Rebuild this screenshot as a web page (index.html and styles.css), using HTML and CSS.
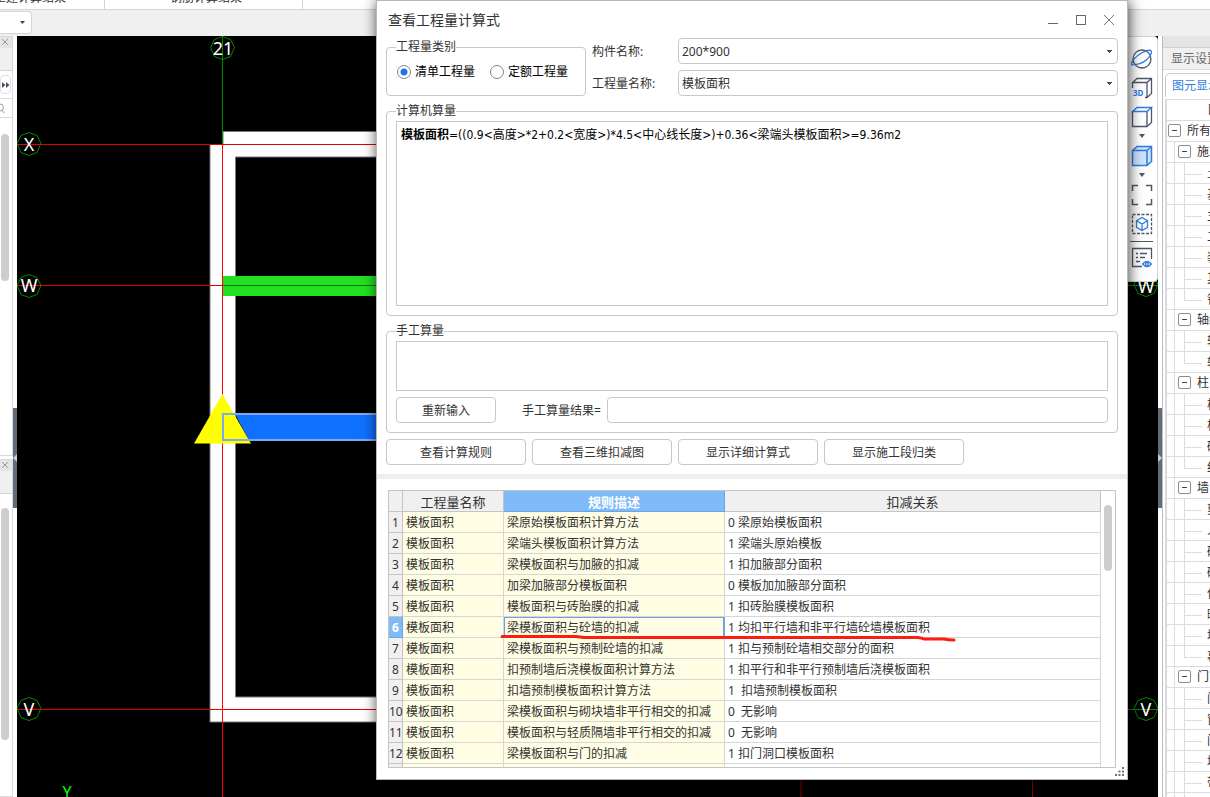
FILE: index.html
```html
<!DOCTYPE html>
<html lang="zh-CN">
<head>
<meta charset="utf-8">
<title>查看工程量计算式</title>
<link rel="stylesheet" href="styles.css">
</head>
<body>
<div class="app">
  <header class="ribbon">
    <span class="ribbon-group ribbon-first">土建计算结果</span>
    <span class="ribbon-group ribbon-second">钢筋计算结果</span>
  </header>
  <div class="toolbar">
    <button class="floor-drop" aria-label="楼层"><svg width="6" height="4"><path d="M0 0h5L2.5 3z" fill="#3c4560"/></svg></button>
  </div>
  <main class="workspace">
    <aside class="nav">
      <section class="nav-pane nav-top">
        <div class="nav-close"><svg width="8" height="8"><path d="M1 1l6 6M7 1l-6 6" stroke="#9a9a9a" fill="none"/></svg></div>
        <div class="nav-title"></div>
        <div class="nav-more"><button class="more" aria-label="更多"><svg width="8" height="6"><path d="M0 0l3.500 3L0 6zM4 0l3.500 3L4 6z" fill="#4a5268"/></svg></button></div>
        <div class="nav-search"><svg width="8" height="11"><circle cx="0" cy="4.500" r="3.500" stroke="#999" fill="none"/><path d="M2 7l2 3" stroke="#999"/></svg></div>
        <div class="thumb thumb-a"></div>
      </section>
      <section class="nav-pane nav-bottom">
        <div class="nav-close"><svg width="8" height="8"><path d="M1 1l6 6M7 1l-6 6" stroke="#9a9a9a" fill="none"/></svg></div>
        <div class="nav-title"></div>
        <div class="thumb thumb-b"></div>
      </section>
    </aside>
    <div class="splitter"><div class="handle"><svg width="4" height="8"><path d="M4 0L0 4l4 4z" fill="#c9ced4"/></svg></div></div>
    <div class="canvas">
      <svg class="drawing" viewBox="17 36 1141 761" preserveAspectRatio="xMinYMin slice">
        <path d="M223 131.500H1000V722H210V144.500H223zM235.500 157V697H1000V157z" fill="#fff" stroke="#777" fill-rule="evenodd"/>
        <g fill="none" stroke="#e00000">
          <path d="M17 144.500H376M17 709.500H376M17 285.500H223"/>
          <path d="M222.500 144V797" stroke="#ff0000"/>
          <path d="M801 780V797M1032.500 780V797" stroke="#900000"/>
        </g>
        <rect x="223" y="276" width="160" height="20" fill="#22e022"/>
        <path d="M223 285.500H376" stroke="#0a7a0a"/>
        <path d="M222.500 394L251 443.500H194z" fill="#ffff00"/>
        <path d="M235 414H380V440H249z" fill="#1070ff"/>
        <path d="M380 414H223V440H380" fill="none" stroke="#7aabf0" stroke-width="2"/>
        <g fill="none" stroke="#008a00">
          <path d="M222.500 36V144M1128 285.500H1158M1128 709.500H1158"/>
          <path d="M222.500 36.500l8 3 4 8-4 9-8 3-8-3-4-9 4-8z"/>
          <path d="M29 132.500l8 3 4 8-4 9-8 3-8-3-4-9 4-8z"/>
          <path d="M29 274.500l8 3 4 8-4 9-8 3-8-3-4-9 4-8z"/>
          <path d="M29 697.500l8 3 4 8-4 9-8 3-8-3-4-9 4-8z"/>
          <path d="M1146 273.500l8 3 4 8-4 9-8 3-8-3-4-9 4-8z"/>
          <path d="M1146 697.500l8 3 4 8-4 9-8 3-8-3-4-9 4-8z"/>
        </g>
        <g class="axis-name">
          <text x="223" y="55">21</text>
          <text x="29" y="151">X</text>
          <text x="29" y="292">W</text>
          <text x="29" y="716">V</text>
          <text x="1146" y="293">W</text>
          <text x="1146" y="716">V</text>
        </g>
        <text class="axis-y" x="67" y="798">Y</text>
      </svg>
      <div class="view-tools">
        <button aria-label="动态观察"><svg width="22" height="22" fill="none" stroke="#4d566b" stroke-width="1.300"><circle cx="11" cy="11" r="9"/><path d="M4 16C-3 20 1 11 9 6S22 1 20 6 9 18 3 16" stroke="#2f7de0"/></svg></button>
        <button aria-label="三维"><svg width="22" height="22" fill="none" stroke="#4d566b" stroke-width="1.300"><path d="M1.500 11V5.500L6 1.500H20.500V16.500L16 20.500H14M1.500 5.500H16V20.500M16 5.500L20.500 1.500"/><text x="2" y="19" class="icon-3d">3D</text></svg></button>
        <button aria-label="线框"><svg width="22" height="22" fill="none" stroke="#4d566b" stroke-width="1.300"><path d="M1.500 5.500V20.500H16V5.500M16 20.500L20.500 16.500V1.500"/><path d="M1.500 5.500L6 1.500H20.500L16 5.500z" stroke="#2f7de0"/></svg></button>
        <svg class="caret" width="8" height="4"><path d="M1 0h6L4 4z" fill="#4d566b"/></svg>
        <button aria-label="实体"><svg width="22" height="22" fill="#cfe2fb" stroke="#2f7de0" stroke-width="1.500"><path d="M1.500 5.500L6 1.500H20.500V16.500L16 20.500H1.500z"/><path d="M1.500 5.500H16V20.500M16 5.500L20.500 1.500" fill="none"/></svg></button>
        <svg class="caret" width="8" height="4"><path d="M1 0h6L4 4z" fill="#4d566b"/></svg>
        <button aria-label="全屏"><svg width="22" height="22" fill="none" stroke="#4d566b" stroke-width="1.500"><path d="M1.500 7V1.500H7M15 1.500H20.500V7M20.500 15V20.500H15M7 20.500H1.500V15"/></svg></button>
        <button aria-label="选择显示"><svg width="22" height="22" fill="none" stroke="#4d566b" stroke-width="1.300"><rect x="1.500" y="1.500" width="19" height="19" stroke-dasharray="3 1.500"/><path d="M11 4.500l5.500 3.200v6.600L11 17.500l-5.500-3.200V7.700zM5.500 7.700L11 11l5.500-3.300M11 11v6.500" stroke="#2f7de0"/></svg></button>
        <hr>
        <button aria-label="显示设置"><svg width="22" height="22" fill="none" stroke="#4d566b" stroke-width="1.300"><path d="M11 19.500H1.500V1.500H20.500V12M5 6.500H7M9 6.500H16M5 10.500H7M9 10.500H14M5 14.500H9"/><path d="M11.500 17q4.500-5 9-0-4.500 5-9 0z" stroke="#2f7de0"/><circle cx="16" cy="17" r="1.500" stroke="#2f7de0"/></svg></button>
      </div>
    </div>
    <div class="splitter splitter-right"><div class="handle"><svg width="4" height="8"><path d="M0 0l4 4-4 4z" fill="#c9ced4"/></svg></div></div>
    <aside class="display">
      <div class="display-strip"></div>
      <div class="display-title">显示设置</div>
      <div class="display-tab">图元显示</div>
      <div class="tree">
        <div class="tree-head">图元</div>
        <div class="node root"><button aria-label="折叠"></button>所有构件</div>
        <div class="node group"><button aria-label="折叠"></button>施工段</div>
        <div class="node leaf">土方</div><div class="node leaf">基础</div><div class="node leaf">主体</div><div class="node leaf">二次</div><div class="node leaf">装修</div><div class="node leaf">其它</div><div class="node leaf last">钢筋</div>
        <div class="node group"><button aria-label="折叠"></button>轴线</div>
        <div class="node leaf">轴网</div><div class="node leaf last">辅轴</div>
        <div class="node group"><button aria-label="折叠"></button>柱</div>
        <div class="node leaf">柱</div><div class="node leaf">构造柱</div><div class="node leaf">砌体柱</div><div class="node leaf last">约束</div>
        <div class="node group"><button aria-label="折叠"></button>墙</div>
        <div class="node leaf">剪力墙</div><div class="node leaf">人防</div><div class="node leaf">砌体墙</div><div class="node leaf">砌体</div><div class="node leaf">保温墙</div><div class="node leaf">暗梁</div><div class="node leaf">墙垛</div><div class="node leaf last">幕墙</div>
        <div class="node group"><button aria-label="折叠"></button>门窗洞</div>
        <div class="node leaf">门</div><div class="node leaf">窗</div><div class="node leaf">门联窗</div><div class="node leaf">墙洞</div><div class="node leaf">带形窗</div><div class="node leaf">带形洞</div>
      </div>
    </aside>
  </main>
</div>

<section class="dialog" role="dialog" aria-labelledby="dialog-title">
  <header class="titlebar">
    <h1 id="dialog-title">查看工程量计算式</h1>
    <div class="window-buttons">
      <button aria-label="最小化"><svg width="12" height="12"><path d="M1 9.500H11" stroke="#666"/></svg></button>
      <button aria-label="最大化"><svg width="12" height="12"><rect x="1.500" y="1.500" width="9" height="9" stroke="#666" fill="none"/></svg></button>
      <button aria-label="关闭"><svg width="12" height="12"><path d="M1 1L11 11M11 1L1 11" stroke="#777" fill="none"/></svg></button>
    </div>
  </header>
  <div class="form">
    <div class="selectors">
      <fieldset class="kind">
        <legend>工程量类别</legend>
        <div class="radios">
          <label><input type="radio" name="kind" checked>清单工程量</label>
          <label><input type="radio" name="kind">定额工程量</label>
        </div>
      </fieldset>
      <div class="fields">
        <label for="component">构件名称:</label>
        <select id="component"><option>200*900</option></select>
        <label for="quantity">工程量名称:</label>
        <select id="quantity"><option>模板面积</option></select>
      </div>
    </div>
    <fieldset class="computed">
      <legend>计算机算量</legend>
      <div class="formula" role="textbox" aria-readonly="true" tabindex="0"><b>模板面积</b>=((0.9&lt;高度&gt;*2+0.2&lt;宽度&gt;)*4.5&lt;中心线长度&gt;)+0.36&lt;梁端头模板面积&gt;=9.36m2</div>
    </fieldset>
    <fieldset class="manual">
      <legend>手工算量</legend>
      <textarea class="manual-input" aria-label="手工算量"></textarea>
      <div class="manual-row">
        <button class="btn">重新输入</button>
        <label for="result">手工算量结果=</label>
        <input id="result" type="text">
      </div>
    </fieldset>
    <div class="actions">
      <button class="btn">查看计算规则</button>
      <button class="btn">查看三维扣减图</button>
      <button class="btn">显示详细计算式</button>
      <button class="btn">显示施工段归类</button>
    </div>
  </div>
  <div class="divider"></div>
  <div class="rules">
    <div class="rules-scroll">
      <table>
        <colgroup><col class="c-no"><col class="c-name"><col class="c-desc"><col></colgroup>
        <thead><tr><th></th><th>工程量名称</th><th class="picked">规则描述</th><th>扣减关系</th></tr></thead>
        <tbody>
          <tr><th>1</th><td>模板面积</td><td>梁原始模板面积计算方法</td><td>0 梁原始模板面积</td></tr>
          <tr><th>2</th><td>模板面积</td><td>梁端头模板面积计算方法</td><td>1 梁端头原始模板</td></tr>
          <tr><th>3</th><td>模板面积</td><td>梁模板面积与加腋的扣减</td><td>1 扣加腋部分面积</td></tr>
          <tr><th>4</th><td>模板面积</td><td>加梁加腋部分模板面积</td><td>0 模板加加腋部分面积</td></tr>
          <tr><th>5</th><td>模板面积</td><td>模板面积与砖胎膜的扣减</td><td>1 扣砖胎膜模板面积</td></tr>
          <tr><th class="picked">6</th><td>模板面积</td><td class="current">梁模板面积与砼墙的扣减</td><td>1 均扣平行墙和非平行墙砼墙模板面积</td></tr>
          <tr><th>7</th><td>模板面积</td><td>梁模板面积与预制砼墙的扣减</td><td>1 扣与预制砼墙相交部分的面积</td></tr>
          <tr><th>8</th><td>模板面积</td><td>扣预制墙后浇模板面积计算方法</td><td>1 扣平行和非平行预制墙后浇模板面积</td></tr>
          <tr><th>9</th><td>模板面积</td><td>扣墙预制模板面积计算方法</td><td>1  扣墙预制模板面积</td></tr>
          <tr><th>10</th><td>模板面积</td><td>梁模板面积与砌块墙非平行相交的扣减</td><td>0  无影响</td></tr>
          <tr><th>11</th><td>模板面积</td><td>模板面积与轻质隔墙非平行相交的扣减</td><td>0  无影响</td></tr>
          <tr><th>12</th><td>模板面积</td><td>梁模板面积与门的扣减</td><td>1 扣门洞口模板面积</td></tr>
          <tr><th></th><td></td><td></td><td></td></tr>
        </tbody>
      </table>
    </div>
    <div class="rules-bar"><div class="thumb thumb-c"></div></div>
    <svg class="mark" width="458" height="8"><path d="M2 2.500L76 2.500Q80 3 84 3.500H418Q422 4 424 5H444Q448 6 454 6" fill="none" stroke="#fc1c10" stroke-width="3" stroke-linecap="round"/></svg>
  </div>
  <svg class="grip" width="9" height="9" fill="#6b7080"><path d="M7 0h2v2H7zM3.500 3.500h2v2h-2zM7 3.500h2v2H7zM0 7h2v2H0zM3.500 7h2v2h-2zM7 7h2v2H7z"/></svg>
</section>
</body>
</html>
```
FILE: styles.css
```css
* { box-sizing: border-box; }
body {
  margin: 0;
  height: 100vh;
  overflow: hidden;
  position: relative;
  background: #fff;
  color: #333;
  font: 12px/18px "Noto Sans", "Noto Sans CJK SC", sans-serif;
}
button, input, select, textarea { font: inherit; color: inherit; margin: 0; }
button { padding: 0; border: 0; background: none; }
svg { display: block; }

.app { display: flex; flex-direction: column; height: 100%; }

.ribbon {
  display: flex;
  align-items: flex-end;
  height: 10px;
  overflow: hidden;
  border-bottom: 1px solid #d4d4d4;
}
.ribbon-group {
  flex: none;
  height: 20px;
  border-right: 1px solid #d4d4d4;
  line-height: 18px;
  white-space: nowrap;
}
.ribbon-first { width: 105px; text-indent: -6px; }
.ribbon-second { width: 198px; padding-left: 65px; }
.toolbar { flex: none; height: 26px; padding-top: 1px; background: #f0f0f0; }
.floor-drop {
  display: flex;
  align-items: center;
  justify-content: flex-end;
  width: 32px;
  height: 23px;
  padding-right: 5px;
  border: 1px solid #d4d4d4;
  border-left: 0;
  border-radius: 0 4px 4px 0;
  background: #fff;
}

.workspace { flex: 1; display: flex; min-height: 0; }

.nav { flex: none; width: 13px; display: flex; flex-direction: column; gap: 3px; }
.nav-pane { border: solid #d9d9d9; border-width: 1px 1px 1px 0; overflow: hidden; }
.nav-top { flex: 0 0 420px; }
.nav-bottom { flex: 1; }
.nav-close { height: 11px; padding: 1px; background: #e4e4e4; }
.nav-title { height: 23px; background: #f0f0f0; border-bottom: 1px solid #d4d4d4; }
.nav-more { height: 28px; padding-top: 4px; border-bottom: 1px solid #d9d9d9; }
.more {
  display: flex;
  align-items: center;
  padding-left: 1px;
  width: 11px;
  height: 19px;
  border: 1px solid #e0e0e0;
  border-radius: 4px;
}
.nav-search { height: 19px; padding-top: 4px; border-bottom: 1px solid #d9d9d9; }
.thumb { width: 8px; border-radius: 4px; background: #cdcdcd; }
.thumb-a { height: 147px; margin: 16px 0 0 1px; }
.thumb-b { height: 232px; margin: 14px 0 0 1px; }
.thumb-c { height: 66px; }

.splitter { flex: none; width: 4px; display: flex; align-items: center; }
.splitter-right { width: 5px; border-right: 1px solid #b9bdc6; }
.handle {
  width: 4px;
  height: 100px;
  margin-top: 83px;
  display: flex;
  align-items: center;
  background: #626b78;
}

.canvas { flex: 1; position: relative; min-width: 0; background: #000; overflow: hidden; }
.drawing { position: absolute; inset: 0; width: 100%; height: 100%; }
.axis-name { fill: #fff; font-size: 18px; text-anchor: middle; }
.axis-y { fill: #0f0; font-size: 16px; text-anchor: middle; }

.view-tools {
  position: absolute;
  top: 0;
  right: 0;
  width: 36px;
  height: 246px;
  padding: 11px 5px 0 8px;
  display: flex;
  flex-direction: column;
  align-items: center;
  gap: 7px;
  background: #fff;
  border: 1px solid #d4d4d4;
  border-radius: 0 4px 4px 0;
}
.view-tools .caret { margin-top: -1px; }
.view-tools hr { width: 23px; margin: -1px 0 -2px; border: 0; border-top: 1px solid #555; }
.icon-3d { font: bold 8px "Noto Sans", sans-serif; fill: #2f7de0; stroke: none; }

.display { flex: none; width: 47px; overflow: hidden; white-space: nowrap; }
.display-strip { height: 12px; background: #e4e4e4; border-bottom: 1px solid #d0d0d0; }
.display-title { height: 22px; padding-left: 8px; background: #f0f0f0; color: #666; line-height: 22px; border-bottom: 1px solid #dcdcdc; }
.display-tab {
  width: 80px;
  height: 24px;
  margin: 3px 0 2px 2px;
  padding-left: 6px;
  border: 1px solid #c8ccd2;
  border-bottom: 0;
  border-radius: 5px 0 0 0;
  color: #2f7de0;
  line-height: 24px;
}
.tree { margin-left: 2px; border-left: 2px solid #d9d9de; }
.tree-head { height: 22px; padding: 1px 0 0 41px; border: solid #d9d9d9; border-width: 1px 0; }
.node {
  position: relative;
  height: 21px;
  display: flex;
  align-items: center;
  gap: 6px;
  border-bottom: 1px solid #dcdcdc;
}
.root { padding-left: 1px; }
.group { padding-left: 11px; }
.leaf { padding: 1px 0 0 40px; }
.group::before, .leaf::before {
  content: "";
  position: absolute;
  left: 7px;
  top: 0;
  bottom: 0;
  border-left: 1px solid #dcdcdc;
}
.leaf::after {
  content: "";
  position: absolute;
  left: 17px;
  top: 0;
  width: 17px;
  height: 11px;
  border: solid #dcdcdc;
  border-width: 0 0 1px 1px;
}
.leaf:not(.last) { background: linear-gradient(#dcdcdc, #dcdcdc) 17px 0 / 1px 100% no-repeat; }
.node button {
  flex: none;
  width: 13px;
  height: 13px;
  margin-bottom: 1px;
  border: 1px solid #8d8d8d;
  border-radius: 2px;
  background: linear-gradient(#444, #444) center / 5px 1px no-repeat #fff;
}

.dialog {
  position: absolute;
  left: 376px;
  right: 82px;
  top: 0;
  bottom: 17px;
  display: flex;
  flex-direction: column;
  background: #fff;
  border: 1px solid #b8b8b8;
  box-shadow: 1px 1px 13px rgba(0, 0, 0, .75);
}
.titlebar {
  flex: none;
  height: 37px;
  display: flex;
  align-items: center;
  justify-content: space-between;
  padding: 0 12px 0 11px;
}
.titlebar h1 { margin: 0; font-size: 14px; font-weight: normal; }
.window-buttons { display: flex; gap: 16px; }

.form { flex: none; padding: 0 9px; }
fieldset { min-width: 0; margin: 0; padding: 1px 9px 9px; border: 1px solid #c8c8c8; border-radius: 4px; }
legend { padding: 0; line-height: 18px; }
.selectors { display: flex; gap: 6px; }
.kind { width: 200px; height: 58px; }
.radios { display: flex; gap: 15px; padding: 6px 0 0 1px; color: #000; }
.radios label { display: flex; align-items: center; gap: 4px; }
.radios input {
  appearance: none;
  width: 14px;
  height: 14px;
  margin-bottom: 1px;
  border: 1px solid #858585;
  border-radius: 50%;
}
.radios input:checked { background: radial-gradient(circle, #1f74e8 0 3px, #fff 4px); }
.fields {
  flex: 1;
  display: grid;
  grid-template-columns: 86px 1fr;
  grid-auto-rows: 26px;
  row-gap: 6px;
  align-items: center;
}
.fields label, .manual-row label { padding-top: 2px; }
select, .manual-row input, .btn { height: 26px; border: 1px solid #c8c8c8; border-radius: 4px; background: #fff; }
.btn { padding-top: 2px; }
select {
  appearance: none;
  width: 100%;
  padding: 2px 3px 0;
  background:
    linear-gradient(#3c4560, #3c4560) right 5px top 11px / 5px 1px no-repeat,
    linear-gradient(#3c4560, #3c4560) right 6px top 12px / 3px 1px no-repeat,
    linear-gradient(#3c4560, #3c4560) right 7px top 13px / 1px 1px no-repeat,
    #fff;
}
.computed { margin-top: 6px; }
.formula {
  height: 185px;
  padding: 4px;
  border: 1px solid #c8c8c8;
  color: #000;
  font-family: "DejaVu Sans Condensed", "Noto Sans", "Noto Sans CJK SC", sans-serif;
}
.manual { margin-top: 6px; }
.manual-input { display: block; width: 100%; height: 50px; border: 1px solid #c8c8c8; resize: none; }
.manual-row { display: flex; align-items: center; gap: 6px; padding-top: 6px; }
.manual-row .btn { width: 100px; margin-right: 20px; }
.manual-row input { flex: 1; min-width: 0; }
.actions { display: flex; gap: 6px; margin-top: 6px; }
.actions .btn { width: 140px; }
.divider { flex: none; height: 5px; margin-top: 9px; background: #eee; }

.rules {
  position: relative;
  flex: 1;
  min-height: 0;
  display: flex;
  margin: 11px;
  border: 1px solid #c4c4c4;
}
.rules-scroll { flex: 1; overflow: hidden; }
.rules table { width: 100%; border-collapse: separate; border-spacing: 0; table-layout: fixed; }
.c-no { width: 14px; }
.c-name { width: 101px; }
.c-desc { width: 221px; }
.rules th, .rules td {
  height: 21px;
  padding: 2px 3px 0;
  border: solid #d6d6d6;
  border-width: 0 1px 1px 0;
  text-align: left;
  white-space: pre;
  line-height: 18px;
}
.rules th { padding: 2px 0 0; background: #f0f0f0; border-color: #c4c4c4; font-weight: normal; text-align: center; }
.rules thead th { font-size: 13px; }
.rules td:nth-child(2), .rules td:nth-child(3) { background: #fffde4; }
.rules th.picked { background: #80baf9; border-color: #68a5e4; color: #fff; font-weight: bold; }
.rules td.current { box-shadow: inset 0 0 0 1px #68a5e4; border-color: #68a5e4; }
.rules-bar { width: 14px; padding: 14px 3px; }
.mark { position: absolute; left: 111px; top: 143px; }
.grip { position: absolute; right: 3px; bottom: 3px; }
```
